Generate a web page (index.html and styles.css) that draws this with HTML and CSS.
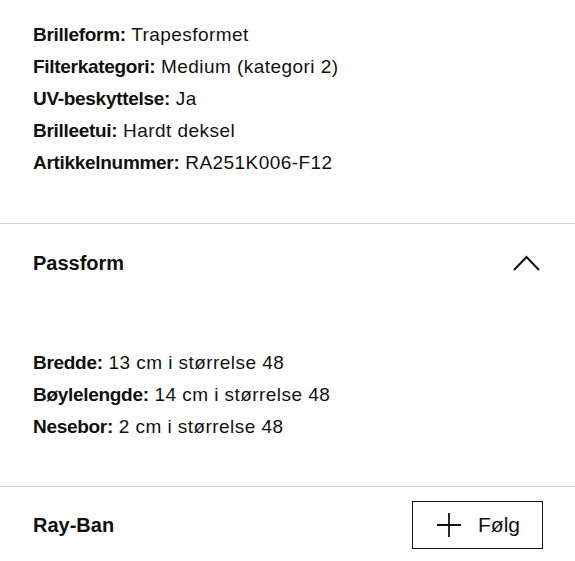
FILE: index.html
```html
<!DOCTYPE html>
<html lang="no">
<head>
<meta charset="utf-8">
<link rel="stylesheet" href="styles.css">
</head>
<body>
<section class="specs">
  <p class="row"><b>Brilleform:</b> Trapesformet</p>
  <p class="row"><b>Filterkategori:</b> Medium (kategori 2)</p>
  <p class="row"><b>UV-beskyttelse:</b> Ja</p>
  <p class="row"><b>Brilleetui:</b> Hardt deksel</p>
  <p class="row"><b>Artikkelnummer:</b> RA251K006-F12</p>
</section>
<section class="accordion">
  <div class="acc-head">
    <h2 class="acc-title">Passform</h2>
    <svg class="chevron" width="27" height="16" viewBox="0 0 27 16"><path d="M1 15 L13.5 2 L26 15" fill="none" stroke="#111" stroke-width="2"/></svg>
  </div>
  <div class="acc-body">
    <p class="row"><b>Bredde:</b> 13 cm i størrelse 48</p>
    <p class="row"><b>Bøylelengde:</b> 14 cm i størrelse 48</p>
    <p class="row"><b>Nesebor:</b> 2 cm i størrelse 48</p>
  </div>
</section>
<section class="brand">
  <span class="brand-name">Ray-Ban</span>
  <button class="follow"><svg width="24" height="24" viewBox="0 0 24 24"><path d="M12 0 V24 M0 12 H24" stroke="#111" stroke-width="1.8"/></svg><span>Følg</span></button>
</section>
</body>
</html>
```
FILE: styles.css
```css
html, body {
  margin: 0;
  padding: 0;
  background: #fff;
}
body {
  font-family: "Liberation Sans", Arial, sans-serif;
  color: #111;
  width: 575px;
}
.row {
  margin: 0;
  font-size: 19px;
  line-height: 32px;
  letter-spacing: 0.45px;
}
.row b {
  font-weight: 700;
  letter-spacing: -0.3px;
}
.specs {
  padding: 19px 33px 44px;
  border-bottom: 1px solid #d2d2d2;
}
.accordion {
  border-bottom: 1px solid #d2d2d2;
}
.acc-head {
  display: flex;
  justify-content: space-between;
  align-items: center;
  padding: 23px 35px 0 33px;
  height: 32px;
}
.acc-title {
  margin: 0;
  font-size: 20px;
  font-weight: 700;
}
.chevron {
  display: block;
}
.acc-body {
  padding: 68px 33px 43px;
}
.brand {
  display: flex;
  justify-content: space-between;
  align-items: center;
  padding: 14px 32px 12px 33px;
}
.brand-name {
  font-size: 20px;
  font-weight: 700;
}
.follow {
  display: flex;
  align-items: center;
  gap: 17px;
  width: 131px;
  height: 48px;
  padding: 0 0 0 24px;
  border: 1.5px solid #111;
  background: #fff;
  font-family: "Liberation Sans", Arial, sans-serif;
  font-size: 21px;
  color: #111;
  box-sizing: border-box;
}
.follow svg {
  display: block;
}
```
